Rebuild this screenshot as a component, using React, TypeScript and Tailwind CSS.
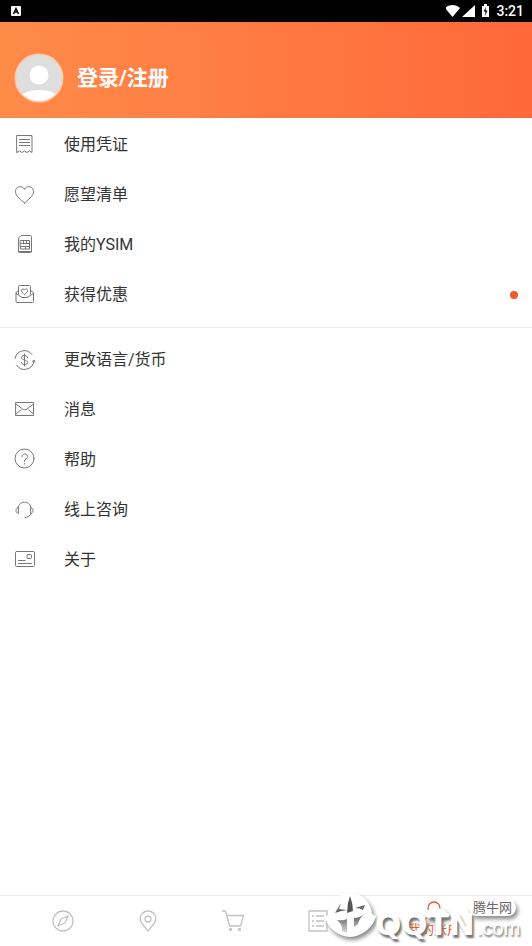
import type { ReactNode } from "react";

const cjk = "font-[Roboto,'Noto_Sans_CJK_SC',sans-serif]";

function Icon({ children }: { children: ReactNode }) {
  return (
    <svg
      viewBox="0 0 20 20"
      className="size-5 shrink-0 overflow-visible fill-none stroke-[#777] stroke-1"
      strokeLinecap="round"
      strokeLinejoin="round"
      aria-hidden="true"
    >
      {children}
    </svg>
  );
}

const VoucherIcon = (
  <Icon>
    <path d="M3 .5h15v17l-2.500-1.500-2.500 1.500-2.500-1.500-2.500 1.500-2.500-1.500-2.500 1.500z" />
    <path d="M5.500 4.500h10M5.500 7.500h10M5.500 10.500h10" />
  </Icon>
);
const HeartIcon = (
  <Icon>
    <path d="M10.500 18C7 15 1.500 11 1.500 6.500 1.500 1 8.500 0 10.500 4.500c2-4.500 9-3.500 9 2 0 4.500-5.500 8.500-9 11.500z" />
  </Icon>
);
const SimIcon = (
  <Icon>
    <path d="M7.500.5h9a1 1 0 0 1 1 1v15a1 1 0 0 1-1 1h-11a1 1 0 0 1-1-1v-13zM4.500 16.500h13" />
    <path d="M6.500 5.500h9V14h-4v-2.500h-5zM6.500 8.500h9M9.500 5.500v3M12.500 5.500v3M11.500 11.500h4M6.500 11.500V14h5" />
  </Icon>
);
const OfferIcon = (
  <Icon>
    <path d="M4.500 9V1.500a1 1 0 0 1 1-1h10a1 1 0 0 1 1 1V9" />
    <path d="M4.500 5.500 2 7.500v9a1 1 0 0 0 1 1h15.500a1 1 0 0 0 1-1v-9l-3-2M2 8.500l6 4h5l6.500-4" />
    <path d="M10.500 9.500c-1.500-1.200-3-2.300-3-4 0-2 2.300-2 3-.5.7-1.500 3-1.500 3 .5 0 1.700-1.500 2.800-3 4z" />
  </Icon>
);
const CurrencyIcon = (
  <Icon>
    <path d="M1 8.500a9.500 9.500 0 0 1 17-4M20 10.500a9.500 9.500 0 0 1-17.500 4.500M18.500 11.500l1.500-1.500 1 2" />
    <path d="M13.500 7.500c0-3-6-3-6 0s6 2 6 5-6 3-6 0M10.500 4v12" />
  </Icon>
);
const MailIcon = (
  <Icon>
    <path d="M2 2.500h17.500v13H2zM2 4l6.500 5c1.500 1 3 1 4.500 0l6.500-5M2 14l5-4M19.500 14l-5-4" />
  </Icon>
);
const HelpIcon = (
  <Icon>
    <circle cx="10.500" cy="8.500" r="9.500" />
    <path d="M8 6.500c0-3.500 5.500-3.200 5.500 0 0 2-3 2.300-3 5M10.500 13.500v.5" />
  </Icon>
);
const SupportIcon = (
  <Icon>
    <path d="M4 8c1-8 12-8 13 0M4 7.500c-2.800.5-2.800 5.500 0 6zM17 7.500c2.800.5 2.800 5.500 0 6zM17 13.500c-.8 2.500-3 3.500-6 4" />
  </Icon>
);
const AboutIcon = (
  <Icon>
    <rect x="1.500" y="1.500" width="19" height="15" rx="1" />
    <rect x="13" y="4.500" width="4.500" height="4" rx="1" />
    <path d="M4.500 10.500h6.500M4.500 13.500h13" />
  </Icon>
);

type Item = { label: string; icon: ReactNode; dot?: boolean };

const personal: Item[] = [
  { label: "使用凭证", icon: VoucherIcon },
  { label: "愿望清单", icon: HeartIcon },
  { label: "我的YSIM", icon: SimIcon },
  { label: "获得优惠", icon: OfferIcon, dot: true },
];
const general: Item[] = [
  { label: "更改语言/货币", icon: CurrencyIcon },
  { label: "消息", icon: MailIcon },
  { label: "帮助", icon: HelpIcon },
  { label: "线上咨询", icon: SupportIcon },
  { label: "关于", icon: AboutIcon },
];

function MenuList({ items }: { items: Item[] }) {
  return (
    <ul>
      {items.map((item) => (
        <li key={item.label}>
          <button className="flex h-[50px] w-full items-center gap-[30px] px-[14px] text-left text-base text-[#333]">
            {item.icon}
            <span className="grow">{item.label}</span>
            {item.dot && <span className="size-2 rounded-full bg-[#f1592a]" />}
          </button>
        </li>
      ))}
    </ul>
  );
}

function StatusBar() {
  return (
    <div className="flex h-[22px] items-center justify-between bg-black pr-2 pl-[11px] text-white">
      <svg viewBox="0 0 10 10" className="size-[10px]" aria-hidden="true">
        <rect width="10" height="10" rx="1" fill="#fff" />
        <path d="M2.500 8 5 2.500 7.500 8M3.500 6h3" fill="none" stroke="#000" strokeWidth="1.500" />
      </svg>
      <div className="flex items-center">
        <svg viewBox="0 0 46 14" className="mr-1 h-[14px] w-[46px] fill-white" aria-hidden="true">
          <path d="M-1 4c4-4 11-4 15 0L6.500 13zM29 1v12H16zM36 2h2V0h3v2h2v11h-7z" />
          <path d="m40 3-2.500 4.500h2L39 12l2.500-5.500h-2z" fill="#000" />
        </svg>
        <span className="text-sm font-medium">3:21</span>
      </div>
    </div>
  );
}

function TabButton({ label, children }: { label: string; children: ReactNode }) {
  return (
    <button aria-label={label} className="flex items-center">
      <svg
        viewBox="0 0 22 22"
        className="size-[22px] fill-none stroke-[#c2c2c2] stroke-[1.3]"
        strokeLinejoin="round"
        aria-hidden="true"
      >
        {children}
      </svg>
    </button>
  );
}

function Watermark() {
  return (
    <div className="pointer-events-none absolute right-0 bottom-0 h-[56px] w-[208px]">
      <svg viewBox="0 0 208 56" className="absolute inset-0 drop-shadow-[2px_3px_2px_#888]" aria-hidden="true">
        <defs>
          <linearGradient id="slot" x1="0" y1="0" x2="0" y2="1">
            <stop offset="0" stopColor="#555" />
            <stop offset="1" stopColor="#ddd" />
          </linearGradient>
        </defs>
        <circle cx="26" cy="25" r="22" fill="#fff" />
        <path d="M1 27q5-3 8-11h34q3 8 9 10-3 12-15 18H15Q4 39 1 27z" fill="#fff" />
        <path d="M26 6q3 8 3 15l-6 2q0-9 3-17z" fill="#555" />
        <path d="M17 13l-6 10q5-2 12-3l-8-1zM31 18l10-3-2 5q-3-2-8-2z" fill="#666" />
        <path d="M13 30q6 1 10-1v14l-5-2q1-6-5-11zM30 28q6 0 10-4-5 5-6 10l-4 3z" fill="url(#slot)" />
        <ellipse cx="112" cy="24" rx="11" ry="6" fill="#fff" />
        <rect x="145" y="10" width="47" height="16" rx="8" fill="#fff" />
      </svg>
      <span className="absolute top-[18px] left-[51px] font-['DejaVu_Sans'] text-[31px] leading-8 font-bold text-white [text-shadow:2px_3px_2px_#777]">
        QQTN
      </span>
      <span className="absolute top-[26px] left-[153px] font-['Liberation_Sans'] text-[20px] leading-6 text-white [text-shadow:1px_2px_2px_#666]">
        .com
      </span>
      <span className="absolute top-[10px] left-[149px] text-[13px] leading-4 text-[#666]">腾牛网</span>
    </div>
  );
}

export default function App() {
  return (
    <div className={`flex min-h-screen flex-col bg-white ${cjk}`}>
      <StatusBar />
      <header className="bg-linear-to-r from-[#ff8b49] to-[#ff683b]">
        <button className="flex h-24 w-full items-center gap-[13px] px-[14px] pt-4 text-left text-[21px] leading-7 font-bold text-white">
          <svg viewBox="0 0 50 50" className="size-[50px]" aria-hidden="true">
            <clipPath id="avatar">
              <circle cx="25" cy="25" r="23" />
            </clipPath>
            <circle cx="25" cy="25" r="24.500" fill="#ffc9ad" />
            <g clipPath="url(#avatar)">
              <path d="M0 0h50v50H0z" fill="#dedede" />
              <circle cx="25" cy="22" r="9.500" fill="#fff" />
              <ellipse cx="25" cy="48" rx="21" ry="11" fill="#fff" />
            </g>
          </svg>
          登录/注册
        </button>
      </header>
      <main className="grow pt-[2px]">
        <MenuList items={personal} />
        <hr className="my-[7px] border-[#eee]" />
        <MenuList items={general} />
      </main>
      <footer className="relative border-t border-[#eee]">
        <nav className="flex h-[50px] justify-between pr-[56px] pl-[52px]">
          <TabButton label="探索">
            <circle cx="11" cy="11" r="10" />
            <path d="m16 6-7 3-3 7 7-3z" />
          </TabButton>
          <TabButton label="目的地">
            <path d="M11 21C8 17 3 13 3 8.500a8 7.500 0 0 1 16 0C19 13 14 17 11 21z" />
            <circle cx="11" cy="9" r="3" />
          </TabButton>
          <TabButton label="购物车">
            <path d="M0 1h3.500l4 15h11l3-10.500H5" />
            <circle cx="8.500" cy="19.500" r="1" />
            <circle cx="17.500" cy="19.500" r="1" />
          </TabButton>
          <TabButton label="订单">
            <path d="M2 1h18v20H2zM5 6h2M9 6h8M5 11h2M9 11h8M5 16h2M9 16h8" />
          </TabButton>
          <button className="flex w-[84px] flex-col items-center pt-1 text-[13px] leading-4 text-[#e8592f]">
            <svg viewBox="0 0 22 22" className="size-[22px] fill-none stroke-[#e8592f] stroke-[1.3]" aria-hidden="true">
              <circle cx="11" cy="8" r="6" />
              <path d="M2 21c1-8 17-8 18 0" />
            </svg>
            我的账户
          </button>
        </nav>
        <Watermark />
      </footer>
    </div>
  );
}
